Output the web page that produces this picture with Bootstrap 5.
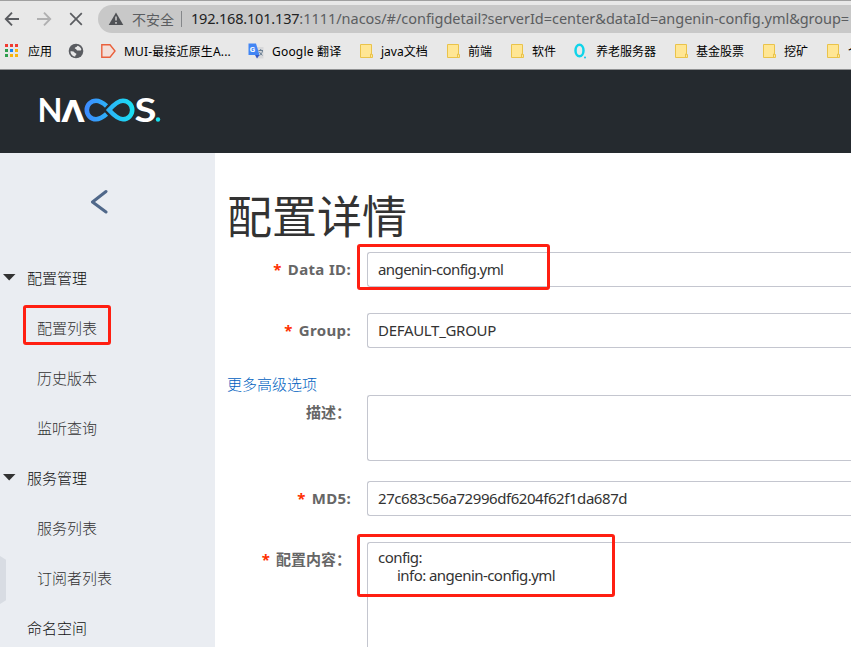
<!DOCTYPE html>
<html lang="zh-CN">
<head>
<meta charset="utf-8">
<meta name="viewport" content="width=device-width, initial-scale=1">
<title>Nacos</title>
<link href="https://cdn.jsdelivr.net/npm/bootstrap@5.3.0/dist/css/bootstrap.min.css" rel="stylesheet">
<style>
html,body{height:647px;overflow:hidden}
body{font-family:"Noto Sans","Noto Sans CJK SC",sans-serif;font-size:15px;color:#333;background:#fff}
svg{display:block;flex:none}
.chrome{height:70px;background:#e8e8e8;border-top:1px solid #a0a0a0;border-bottom:1px solid #909193;overflow:hidden}
.toolbar-row{height:32px;padding:4px 0 0 4px}
.nav-icon{margin-right:16px}
.omnibox{height:28px;width:753px;background:#c8c8c8;border-radius:14px 0 0 14px;padding-left:10px;margin-left:-2px;color:#5b5d60}
.insecure{font:14px "Noto Sans CJK SC",sans-serif;margin-left:8px}
.sep{width:1px;height:16px;background:#85878a;margin:0 9px 0 7px}
.url{font-family:"Noto Sans",sans-serif;font-size:14.5px;letter-spacing:-.03px}
.url b{font-weight:400;color:#222;letter-spacing:-.19px}
.bookmarks{height:36px;gap:16px;padding-left:4px;font:12px "Noto Sans","Noto Sans CJK SC",sans-serif;color:#000}
.bookmark{gap:8px;height:36px}
.w-mui{width:108px;letter-spacing:.15px}.w-google{width:69px;letter-spacing:.2px}.w-java{width:47px}
.masthead{height:83px;background:#252a2f;padding:27px 0 0 36px}
.side{width:215px;height:494px;background:#eaedf2;position:relative;flex:none}
.collapse-box{height:100px;padding:36px 0 0 90px}
.side-row{height:50px;padding-left:3px;font-family:"Noto Sans CJK SC",sans-serif;font-weight:300;color:#111}
.side-row svg{margin-right:11px;margin-top:-2px}
.side-sub{padding-left:37px;color:#333}
.side-top{padding-left:27px}
.handle{position:absolute;left:0;top:403px;width:6px;height:48px;background:#d8dce3;clip-path:polygon(0 0,100% 8%,100% 92%,0 100%)}
.detail{padding:27px 0 0 12px;height:494px;overflow:hidden;min-width:0}
.page-title{font:400 45px/70px "Noto Sans CJK SC",sans-serif;height:72px;margin:0;color:#333}
.field-label{width:124px;flex:none;text-align:right;font-weight:700;color:#666;line-height:34px;white-space:nowrap}
.latin{letter-spacing:.35px}
.field-label i{font-style:normal;color:#ff3000;margin-right:6px}
.field{border:1px solid #c4c6cf;border-right:0;border-radius:3px 0 0 3px;margin-left:16px;padding:0 10px;flex:1;height:35px;line-height:33px;background:#fff;font-size:15px;letter-spacing:-.3px;min-width:0}
.t-id{letter-spacing:-.59px}
.t-md{letter-spacing:-.44px}
.row-a{margin-bottom:26px}
.row-d{margin-bottom:20px}
.more{font:300 15px/20px "Noto Sans CJK SC",sans-serif;color:#005fc0;text-decoration:none;height:21px}
.h-desc{height:66px}
.h-content{height:200px;line-height:18px;padding-top:5px;letter-spacing:-.55px}
.indent{padding-left:19px}
.mark-box{position:absolute;border:3px solid #ff1f12;border-radius:3px}
.m1{left:23px;top:305px;width:88px;height:40px}
.m2{left:357px;top:244px;width:193px;height:46px}
.m3{left:357px;top:534px;width:258px;height:63px}
</style>
<script src="https://cdn.jsdelivr.net/npm/bootstrap@5.3.0/dist/js/bootstrap.bundle.min.js"></script>
</head>
<body class="position-relative">
<svg width="0" height="0" class="position-absolute"><defs>
<symbol id="folder" viewBox="0 0 16 16"><path d="M3.5 1.5h11v10h1v3h-12z" fill="#ffe694" stroke="#eac34a"/><path d="M13.5 14v-3h1.5" fill="none" stroke="#eac34a"/></symbol>
</defs></svg>
<div class="chrome">
  <div class="toolbar-row d-flex align-items-center">
    <svg class="nav-icon" width="16" height="16" viewBox="0 0 16 16" fill="none" stroke="#5a5c60" stroke-width="1.9"><path d="M15 8H2M8 1.7 1.8 8 8 14.3"/></svg>
    <svg class="nav-icon" width="16" height="16" viewBox="0 0 16 16" fill="none" stroke="#b0b0b1" stroke-width="1.9"><path d="M1 8h13M8 1.7 14.2 8 8 14.3"/></svg>
    <svg class="nav-icon" width="16" height="16" viewBox="0 0 16 16" fill="none" stroke="#5a5c60" stroke-width="1.7"><path d="m2.2 2.2 11.6 11.6M13.8 2.2 2.2 13.8"/></svg>
    <div class="omnibox d-flex align-items-center flex-shrink-0 text-nowrap">
      <svg width="16" height="16" viewBox="0 0 16 16"><path d="M8 1.5 15.3 14H.7z" fill="#505256"/><path d="M8 5.5v4M8 11v1.8" stroke="#c8c8c8" stroke-width="1.6"/></svg>
      <span class="insecure">不安全</span><span class="sep"></span>
      <span class="url"><b>192.168.101.137</b>:1111/nacos/#/configdetail?serverId=center&amp;dataId=angenin-config.yml&amp;group=</span>
    </div>
  </div>
  <div class="bookmarks d-flex align-items-center text-nowrap">
    <div class="bookmark d-flex align-items-center"><svg width="16" height="16" viewBox="0 0 16 16"><path d="M1 1h3v3H1zm5 0h3v3H6zm5 0h3v3h-3z" fill="#f13b30"/><path d="M1 6h3v3H1zM1 11h3v3H1z" fill="#2e9e4d"/><path d="M6 6h3v3H6z" fill="#1a84ee"/><path d="M11 6h3v3h-3zM6 11h3v3H6zM11 11h3v3h-3z" fill="#f9b50b"/></svg><span>应用</span></div>
    <div class="bookmark d-flex align-items-center"><svg width="16" height="16" viewBox="0 0 16 16"><circle cx="8" cy="8" r="7.3" fill="#5a5c61"/><path d="M2.5 8.2c2 .1 3.5.1 4 1.2.4.8 1.8.4 1.9 1.7.1 1-1.1 1-1.2 2.4-2.8-.2-4.8-2.5-4.7-5.3zM9.5 2.8c2 .5 3.4 2 3.9 3.8-.5.9-1 1.4-1.9 1-.8-.4-1.2.2-2.3-.2-1-.4-.6-1.5-1.9-1.6-.8-.1-.6-1.3.4-1.5 1.2-.2 1-.9 1.8-1.5z" fill="#e8e8e8"/></svg></div>
    <div class="bookmark d-flex align-items-center"><svg width="16" height="16" viewBox="0 0 16 16"><path d="M1.8 1.7H10L15 8l-5 6.3H1.8z" fill="#f3dfd9" stroke="#e9603c" stroke-width="1.4"/></svg><span class="w-mui">MUI-最接近原生A...</span></div>
    <div class="bookmark d-flex align-items-center"><svg width="16" height="16" viewBox="0 0 16 16"><path d="M6 4h9.5v11.5H9z" fill="#d7d8da"/><path d="M.5.5H8L11.5 12H.5z" fill="#4285f4"/><path d="M7 12h4.5L9 15.5z" fill="#3559c7"/><text x="1.8" y="9" font-size="8" font-weight="700" fill="#fff" font-family="Roboto">G</text><path d="M10.5 7.5H15M12.7 6v1.5M14.5 8c-.4 2-1.5 3.5-3 4.5M11.5 9c.6 1.500 1.800 2.700 3 3.300" fill="none" stroke="#6b7f93"/></svg><span class="w-google">Google 翻译</span></div>
    <div class="bookmark d-flex align-items-center"><svg width="16" height="16"><use href="#folder"/></svg><span class="w-java">java文档</span></div>
    <div class="bookmark d-flex align-items-center"><svg width="16" height="16"><use href="#folder"/></svg><span>前端</span></div>
    <div class="bookmark d-flex align-items-center"><svg width="16" height="16"><use href="#folder"/></svg><span>软件</span></div>
    <div class="bookmark d-flex align-items-center"><svg width="16" height="16" viewBox="0 0 16 16"><ellipse cx="7.5" cy="7.5" rx="4" ry="5.8" fill="none" stroke="#10d4ea" stroke-width="2.5"/><circle cx="13" cy="14.5" r="1" fill="#10c4ea"/></svg><span>养老服务器</span></div>
    <div class="bookmark d-flex align-items-center"><svg width="16" height="16"><use href="#folder"/></svg><span>基金股票</span></div>
    <div class="bookmark d-flex align-items-center"><svg width="16" height="16"><use href="#folder"/></svg><span>挖矿</span></div>
    <div class="bookmark d-flex align-items-center"><svg width="16" height="16"><use href="#folder"/></svg><span>个</span></div>
  </div>
</div>
<header class="masthead">
  <svg width="130" height="30" viewBox="36 96 130 30">
    <defs><linearGradient id="loop" gradientUnits="userSpaceOnUse" x1="84" y1="0" x2="135" y2="0"><stop offset="0" stop-color="#3f88ff"/><stop offset="1" stop-color="#18e2f2"/></linearGradient></defs>
    <g font-family="Lato" font-weight="700" font-size="32" fill="#fff"><text x="37.5" y="120.500" textLength="25" lengthAdjust="spacingAndGlyphs">N</text><text x="61" y="120.500" textLength="24" lengthAdjust="spacingAndGlyphs" font-family="Roboto">Λ</text><text x="134.500" y="120.500" textLength="22" lengthAdjust="spacingAndGlyphs">S</text></g>
    <g fill="none" stroke="url(#loop)" stroke-width="4.600"><path d="M106.500 105C102 101 99.500 99.800 96 99.800a9.200 9.200 0 0 0 0 18.400c3.500 0 6-1.200 10.500-5.200"/><path d="M109 109c5-5.500 9-9.200 14-9.200a9.200 9.200 0 0 1 0 18.400c-5 0-9-3.700-14-9.200z"/></g>
    <circle cx="158" cy="118.500" r="2.200" fill="#18e2f2"/>
  </svg>
</header>
<main class="d-flex">
  <nav class="side">
    <div class="collapse-box"><svg width="18" height="26" viewBox="0 0 18 26"><path d="M16 2.500 2.500 13 16 23" fill="none" stroke="#50688a" stroke-width="3" stroke-linecap="round" stroke-linejoin="round"/></svg></div>
    <div class="side-row d-flex align-items-center"><svg width="13" height="7"><path d="M0 0h12.500L6.200 6.500z" fill="#333"/></svg>配置管理</div>
    <div class="side-row side-sub d-flex align-items-center">配置列表</div>
    <div class="side-row side-sub d-flex align-items-center">历史版本</div>
    <div class="side-row side-sub d-flex align-items-center">监听查询</div>
    <div class="side-row d-flex align-items-center"><svg width="13" height="7"><path d="M0 0h12.500L6.200 6.500z" fill="#333"/></svg>服务管理</div>
    <div class="side-row side-sub d-flex align-items-center">服务列表</div>
    <div class="side-row side-sub d-flex align-items-center">订阅者列表</div>
    <div class="side-row side-top d-flex align-items-center">命名空间</div>
    <span class="handle"></span>
  </nav>
  <section class="detail flex-grow-1">
    <h1 class="page-title">配置详情</h1>
    <div class="d-flex row-a"><span class="field-label latin"><i>*</i>Data ID:</span><div class="field t-id">angenin-config.yml</div></div>
    <div class="d-flex row-a"><span class="field-label latin"><i>*</i>Group:</span><div class="field">DEFAULT_GROUP</div></div>
    <a class="more d-block" href="#">更多高级选项</a>
    <div class="d-flex row-d"><span class="field-label">描述：</span><div class="field h-desc"></div></div>
    <div class="d-flex row-a"><span class="field-label latin"><i>*</i>MD5:</span><div class="field t-md">27c683c56a72996df6204f62f1da687d</div></div>
    <div class="d-flex"><span class="field-label"><i>*</i>配置内容：</span><div class="field h-content"><div>config:</div><div class="indent">info: angenin-config.yml</div></div></div>
  </section>
</main>
<span class="mark-box m1"></span><span class="mark-box m2"></span><span class="mark-box m3"></span>
</body>
</html>
